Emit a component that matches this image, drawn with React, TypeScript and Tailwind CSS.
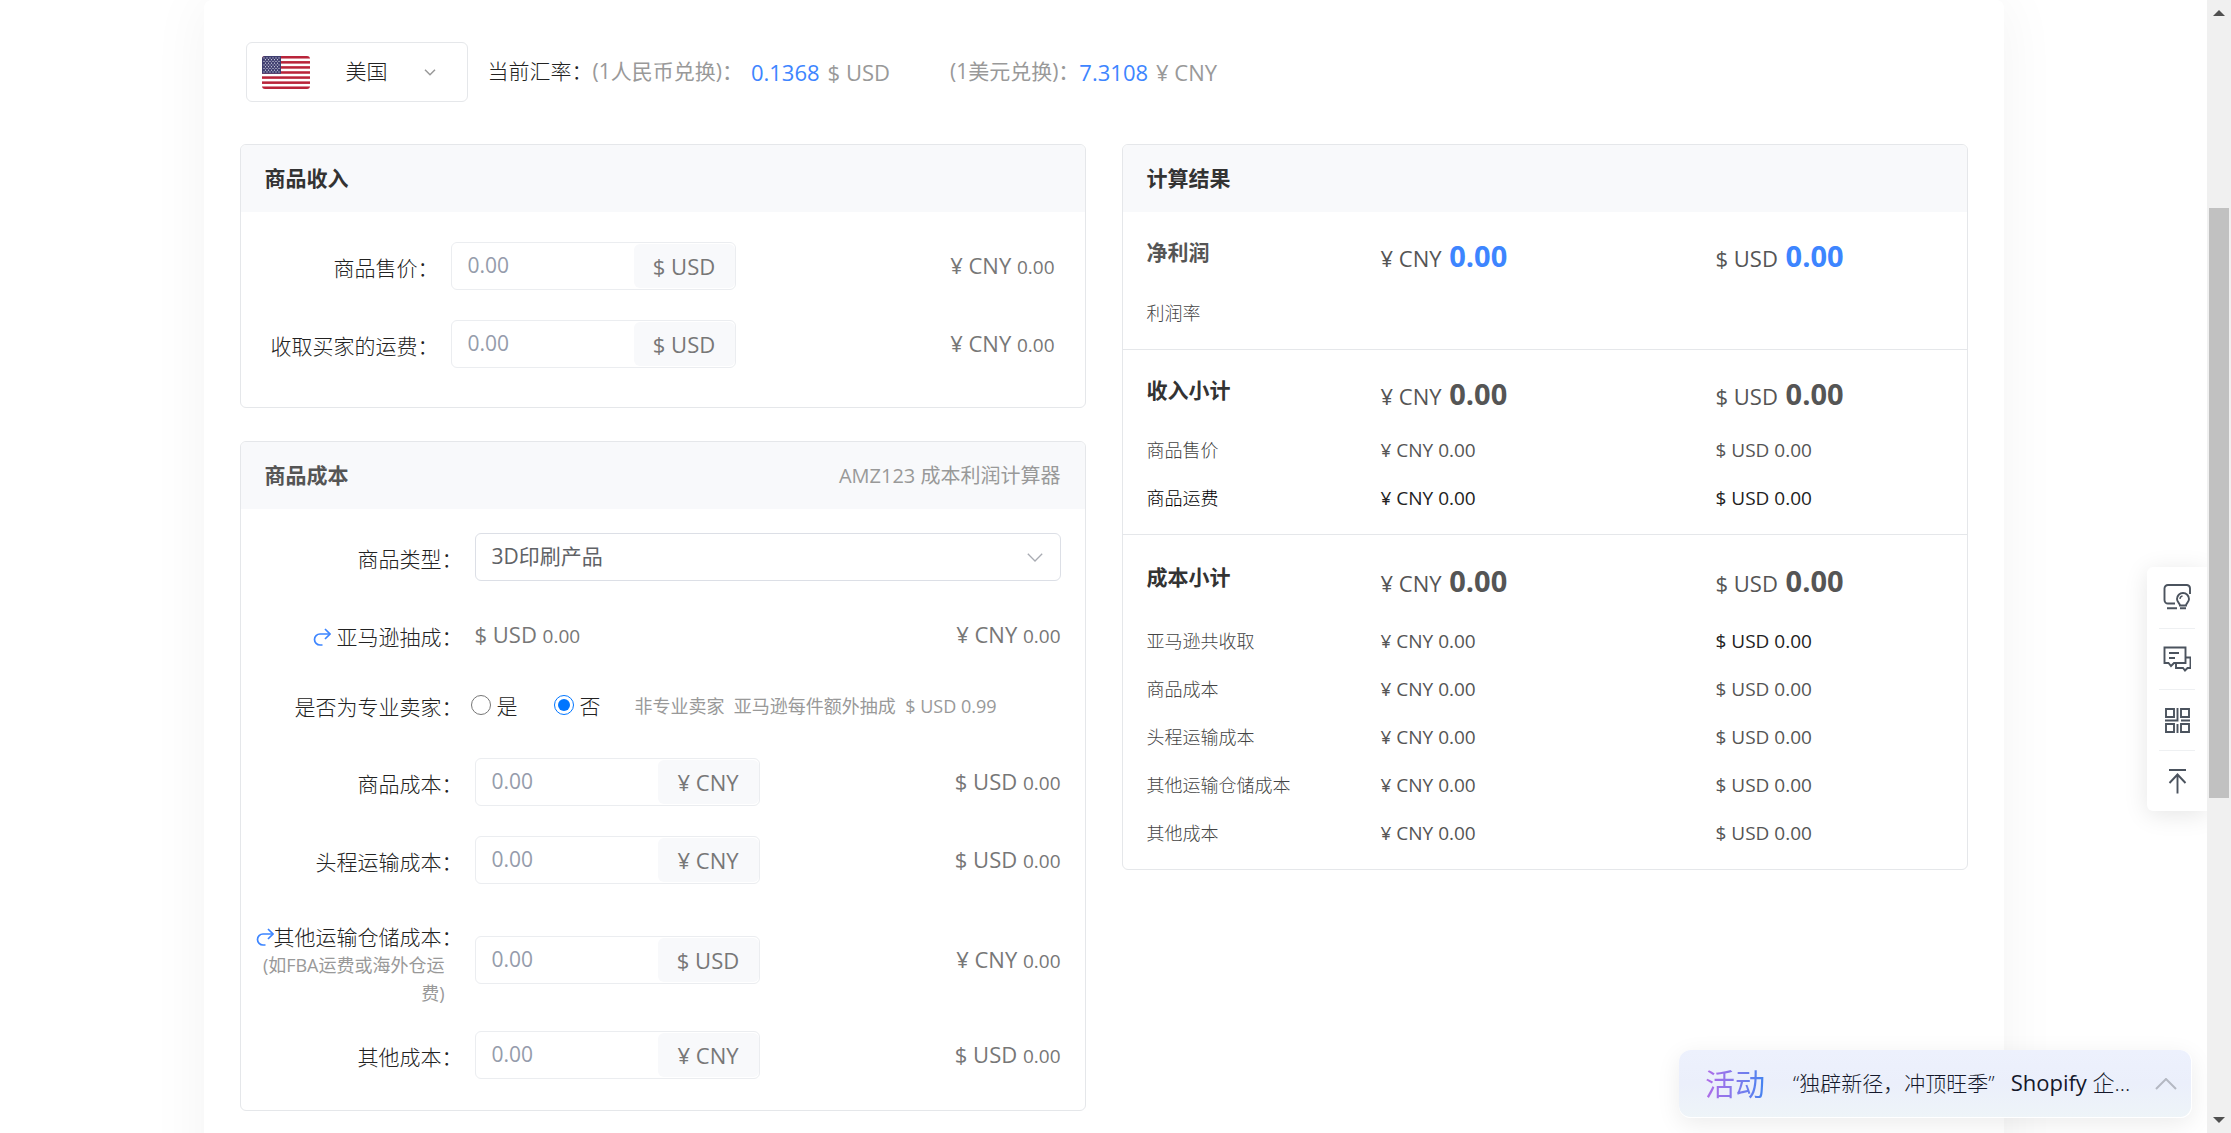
import React, { useId } from "react";

const USD = "$ USD";
const CNY = "¥ CNY";

function Flag() {
  const stars: React.ReactNode[] = [];
  for (let r = 0; r < 9; r++) {
    const odd = r % 2 === 1;
    for (let c = 0; c < (odd ? 5 : 6); c++) {
      stars.push(<circle key={`${r}-${c}`} cx={2 + c * 3 + (odd ? 1.5 : 0)} cy={1.9 + r * 1.75} r={0.6} fill="#d9d9e6" />);
    }
  }
  return (
    <svg viewBox="0 0 48 33" className="h-[33px] w-12 shrink-0 rounded-[3px]" aria-hidden="true">
      <rect width="48" height="33" fill="#fff" />
      {[0, 1, 2, 3, 4, 5, 6].map((i) => (
        <rect key={i} x="0" y={(i * 2 * 33) / 13} width="48" height={33 / 13} fill="#b9243a" />
      ))}
      <rect width="19" height={(33 * 7) / 13} fill="#3f3e70" />
      {stars}
    </svg>
  );
}

function RedoArrow() {
  return (
    <svg viewBox="0 0 18 18" className="inline-block h-[18px] w-[18px] align-[-1px]" fill="none" stroke="#3d85ff" strokeWidth="1.7" aria-hidden="true">
      <path d="M12 1l5 5-5 5" />
      <path d="M17 6H7a5.5 5.5 0 0 0 0 11h2.500" />
    </svg>
  );
}

function Panel({ title, titleClass, extra, children }: { title: string; titleClass: string; extra?: string; children: React.ReactNode }) {
  return (
    <section className="overflow-hidden rounded-md border border-[#e5e7ea]">
      <header className="flex h-[67px] items-center justify-between bg-[#f8f9fb] px-6">
        <h2 className={`text-[21px] font-bold ${titleClass}`}>{title}</h2>
        {extra && <span className="text-[20px] text-[#999]">{extra}</span>}
      </header>
      {children}
    </section>
  );
}

function Amount({ unit }: { unit: string }) {
  return (
    <span className="ml-auto pb-0.5 whitespace-nowrap text-[22px] text-[#777]">
      {unit} <span className="text-[19px]">0.00</span>
    </span>
  );
}

function MoneyInput({ id, unit }: { id: string; unit: string }) {
  return (
    <div className="flex h-12 w-[285px] overflow-hidden rounded-md border border-[#ebedf0] bg-white">
      <input id={id} placeholder="0.00" className="min-w-0 flex-1 bg-transparent pl-4 text-[21px] text-[#606266] outline-none placeholder:text-[#959cab]" />
      <span className="my-px flex w-[101px] items-center justify-center rounded-md bg-[#f8f9fb] text-[22px] text-[#777]">{unit}</span>
    </div>
  );
}

function IncomeRow({ label }: { label: string }) {
  const id = useId();
  return (
    <div className="flex items-center">
      <label htmlFor={id} className="w-[210px] pt-1.5 pr-3 text-right text-[21px] font-light text-[#222]">{label}：</label>
      <MoneyInput id={id} unit={USD} />
      <Amount unit={CNY} />
    </div>
  );
}

const costLabel = "w-[234px] shrink-0 pt-1.5 pr-3 text-right text-[21px] font-light whitespace-nowrap text-[#222]";

function CostRow({ label, unit, other }: { label: string; unit: string; other: string }) {
  const id = useId();
  return (
    <div className="mt-[30px] flex h-12 items-center">
      <label htmlFor={id} className={costLabel}>{label}：</label>
      <MoneyInput id={id} unit={unit} />
      <Amount unit={other} />
    </div>
  );
}

type Line = { label: string; labelClass: string; cny: string; usd: string };

const dark = "text-[#222]";
const mid = "text-[#555]";
const lightMid = "text-[#444]";

function ResultSection({ title, titleClass, numClass, rows, first, headPad }: {
  title: string; titleClass: string; numClass: string; rows: Line[]; first?: boolean; headPad: string;
}) {
  return (
    <tbody className={first ? "" : "border-t border-[#e5e7ea]"}>
      <tr className="align-top">
        <th scope="row" className={`pl-6 text-left text-[21px] leading-7 font-bold ${titleClass} ${headPad}`}>{title}</th>
        {[CNY, USD].map((u) => (
          <td key={u} className={`text-[22px] leading-9 text-[#555] ${headPad}`}>
            {u} <b className={`ml-0.5 text-[29px] leading-9 font-bold ${numClass}`}>0.00</b>
          </td>
        ))}
      </tr>
      {rows.map((r) => (
        <tr key={r.label} className="h-12">
          <th scope="row" className={`pl-6 text-left text-[18px] font-light ${r.labelClass}`}>{r.label}</th>
          <td className={`text-[19px] ${r.cny}`}>{r.cny && "¥ CNY 0.00"}</td>
          <td className={`text-[19px] ${r.usd}`}>{r.usd && "$ USD 0.00"}</td>
        </tr>
      ))}
      <tr className="h-3"><td colSpan={3} /></tr>
    </tbody>
  );
}

const line = (label: string): Line => ({ label, labelClass: lightMid, cny: mid, usd: mid });

function Results() {
  return (
    <table className="w-full table-fixed border-collapse">
      <colgroup>
        <col className="w-[258px]" />
        <col className="w-[335px]" />
        <col />
      </colgroup>
      <ResultSection first title="净利润" titleClass="text-[#555]" numClass="text-[#3d85ff]" headPad="pt-[26px] pb-[13px]"
        rows={[{ label: "利润率", labelClass: lightMid, cny: "", usd: "" }]} />
      <ResultSection title="收入小计" titleClass="text-[#333]" numClass="text-[#555]" headPad="pt-[26px] pb-[13px]"
        rows={[line("商品售价"), { label: "商品运费", labelClass: "text-black", cny: dark, usd: dark }]} />
      <ResultSection title="成本小计" titleClass="text-[#333]" numClass="text-[#555]" headPad="pt-7 pb-4"
        rows={[{ ...line("亚马逊共收取"), usd: dark }, line("商品成本"), line("头程运输成本"), line("其他运输仓储成本"), line("其他成本")]} />
    </table>
  );
}

function SideTools() {
  const cls = "h-7 w-7";
  const p = { viewBox: "0 0 28 28", fill: "none", stroke: "#4b535e", strokeWidth: 1.9, className: cls, "aria-hidden": true } as const;
  const items = [
    { name: "建议", icon: (
      <svg {...p}>
        <path d="M12 20.500H5a3.500 3.500 0 0 1-3.500-3.500V5.500A3.500 3.500 0 0 1 5 2h19a3.500 3.500 0 0 1 3 3.500V11" />
        <path d="M4 25.200h10M17 25.200h6" />
        <path d="M17 22.500c0-2.300-3-3.300-3-6.500a6 6 0 0 1 12 0c0 3.200-3 4.200-3 6.500z" />
        <path d="M17 16a3 3 0 0 1 2.500-3" strokeWidth="1.300" />
      </svg>) },
    { name: "消息", icon: (
      <svg {...p}>
        <path d="M1.500 2.500h21v15.500H11l-3 3-2.500-3h-4z" />
        <path d="M6 8h10M6 13h6" />
        <path d="M22.500 12.500h5V23h-3l-2.500 2.500-2-2.500h-7v-4.500" />
      </svg>) },
    { name: "应用", icon: (
      <svg {...p}>
        <path d="M3 3h8v8H3zM18 3h8v8h-8zM3 18h8v8H3zM18 18h8v8h-8z" />
        <path d="M14.500 2v12.500H2M18 14.500h9M14.500 18v9" />
      </svg>) },
    { name: "返回顶部", icon: (
      <svg {...p}>
        <path d="M6 3h17M14.500 26.500V8M6.500 16l8-8.500 8 8.500" />
      </svg>) },
  ];
  return (
    <nav className="absolute top-1/2 right-0 flex w-[60px] flex-col rounded-l-md bg-white px-3 shadow-[0_4px_24px_rgba(0,0,0,0.1)]">
      {items.map((it, i) => (
        <button key={it.name} type="button" aria-label={it.name}
          className={`flex h-[61px] items-center justify-center ${i > 0 ? "border-t border-[#eef0f2]" : ""}`}>
          {it.icon}
        </button>
      ))}
    </nav>
  );
}

function Promo() {
  return (
    <aside className="absolute right-[15px] bottom-[15px] flex h-[68px] w-[513px] items-center rounded-xl border-r border-b border-white bg-linear-to-b from-[#edf1fd] via-[#ebeffb] to-[#eef4f8] pr-3.5 pl-[26px] shadow-[0_6px_24px_rgba(0,0,0,0.08)]">
      <span className="bg-linear-to-r from-[#b06be8] to-[#3f83f0] bg-clip-text text-[30px] text-transparent">活动</span>
      <a href="#promo" className="ml-7 flex-1 pb-0.5 text-[21px] whitespace-nowrap text-[#14182b]">
        <span className="font-light">“独辟新径，冲顶旺季”</span>
        <span className="ml-4 text-[22px]">Shopify <span className="font-light">企...</span></span>
      </a>
      <button type="button" aria-label="展开">
        <svg viewBox="0 0 22 12" className="h-3 w-[22px]" fill="none" stroke="#b4b8c2" strokeWidth="2" aria-hidden="true">
          <path d="M1 11L11 1l10 10" />
        </svg>
      </button>
    </aside>
  );
}

function ScrollTrack() {
  return (
    <div className="flex w-6 shrink-0 flex-col items-center bg-[#f0f0f0] py-[10px]" aria-hidden="true">
      <svg viewBox="0 0 12 6" className="h-1.5 w-3" fill="#505050"><path d="M0 6L6 0l6 6z" /></svg>
      <div className="flex w-full flex-1 flex-col px-0.5 pt-[192px] pb-[319px]">
        <div className="flex-1 bg-[#c1c1c1]" />
      </div>
      <svg viewBox="0 0 12 6" className="h-1.5 w-3" fill="#505050"><path d="M0 0l6 6 6-6z" /></svg>
    </div>
  );
}

export default function App() {
  const typeId = useId();
  const storeId = useId();
  return (
    <div className="flex h-screen bg-white font-['Open_Sans','Noto_Sans_CJK_SC',sans-serif] text-[#333]" lang="zh-CN">
      <div className="relative min-w-0 flex-1 overflow-hidden">
        <main className="mx-auto min-h-[1200px] max-w-[1800px] rounded-lg bg-white px-9 pt-[42px] shadow-[0_0_60px_rgba(0,0,0,0.05)]">
          <div className="ml-1.5 flex items-center text-[22px] whitespace-nowrap">
            <button type="button" aria-haspopup="listbox" className="mr-5 flex h-[60px] w-[222px] items-center rounded-md border border-[#e5e7ea] pl-[15px] text-[21px]">
              <Flag />
              <span className="ml-9 font-light text-[#222]">美国</span>
              <svg viewBox="0 0 12 7" className="ml-9 h-[7px] w-3" fill="none" stroke="#999" strokeWidth="1.500" aria-hidden="true">
                <path d="M1 .8l5 5 5-5" />
              </svg>
            </button>
            <span className="text-[21px] font-light text-[#222]">当前汇率：</span>
            <span className="text-[21px] text-[#999]">(1人民币兑换)：</span>
            <span className="ml-2 text-[#3d85ff]">0.1368</span>
            <span className="ml-2 text-[#999]">{USD}</span>
            <span className="ml-[60px] text-[21px] text-[#999]">(1美元兑换)：</span>
            <span className="text-[#3d85ff]">7.3108</span>
            <span className="ml-2 text-[#999]">{CNY}</span>
          </div>

          <div className="mt-[42px] grid grid-cols-2 items-start gap-9">
            <div className="flex flex-col gap-[33px]">
              <Panel title="商品收入" titleClass="text-[#333]">
                <div className="flex flex-col gap-[30px] pt-[30px] pr-[30px] pb-[39px]">
                  <IncomeRow label="商品售价" />
                  <IncomeRow label="收取买家的运费" />
                </div>
              </Panel>

              <Panel title="商品成本" titleClass="text-[#555]" extra="AMZ123 成本利润计算器">
                <div className="pt-6 pr-6 pb-[31px]">
                  <div className="flex h-12 items-center">
                    <label htmlFor={typeId} className={costLabel}>商品类型：</label>
                    <div className="relative h-12 flex-1">
                      <select id={typeId} className="h-full w-full appearance-none rounded-md border border-[#dcdfe6] bg-white pl-4 text-[21px] text-[#606266]">
                        <option>3D印刷产品</option>
                      </select>
                      <svg viewBox="0 0 16 9" className="pointer-events-none absolute top-5 right-[18px] h-[9px] w-4" fill="none" stroke="#a8abb2" strokeWidth="1.300" aria-hidden="true">
                        <path d="M.8.8L8 8l7.200-7.200" />
                      </svg>
                    </div>
                  </div>

                  <div className="mt-[30px] flex h-12 items-center">
                    <span className={costLabel}><RedoArrow /> 亚马逊抽成：</span>
                    <span className="pb-0.5 text-[22px] text-[#777]">{USD} <span className="text-[19px]">0.00</span></span>
                    <Amount unit={CNY} />
                  </div>

                  <fieldset className="mt-[30px] flex h-[39px] items-center pb-2 text-[21px] whitespace-nowrap">
                    <span className={costLabel}>是否为专业卖家：</span>
                    <label className="flex items-center font-light text-[#222]">
                      <input type="radio" name="pro" className="mr-1.5 -ml-1 h-5 w-5 accent-[#0075ff]" />
                      <span className="pt-1">是</span>
                    </label>
                    <label className="ml-9 flex items-center font-light text-[#222]">
                      <input type="radio" name="pro" defaultChecked className="mr-1.5 h-5 w-5 accent-[#0075ff]" />
                      <span className="pt-1">否</span>
                    </label>
                    <span className="ml-[34px] pt-1 text-[18px] text-[#999]">非专业卖家&nbsp; 亚马逊每件额外抽成&nbsp; $ USD 0.99</span>
                  </fieldset>

                  <CostRow label="商品成本" unit={CNY} other={USD} />
                  <CostRow label="头程运输成本" unit={CNY} other={USD} />

                  <div className="mt-[38px] flex h-[86px] items-center">
                    <label htmlFor={storeId} className="w-[234px] shrink-0 pr-3 text-right">
                      <span className="block text-[21px] leading-7 font-light whitespace-nowrap text-[#222]"><RedoArrow />其他运输仓储成本：</span>
                      <span className="block pr-[18px] pl-3 text-[18px] leading-7 text-[#999]">(如FBA运费或海外仓运费)</span>
                    </label>
                    <div className="flex flex-1 items-center pb-2.5">
                      <MoneyInput id={storeId} unit={USD} />
                      <Amount unit={CNY} />
                    </div>
                  </div>

                  <div className="-mt-[7px]">
                    <CostRow label="其他成本" unit={CNY} other={USD} />
                  </div>
                </div>
              </Panel>
            </div>

            <Panel title="计算结果" titleClass="text-[#333]">
              <Results />
            </Panel>
          </div>
        </main>
        <SideTools />
        <Promo />
      </div>
      <ScrollTrack />
    </div>
  );
}
